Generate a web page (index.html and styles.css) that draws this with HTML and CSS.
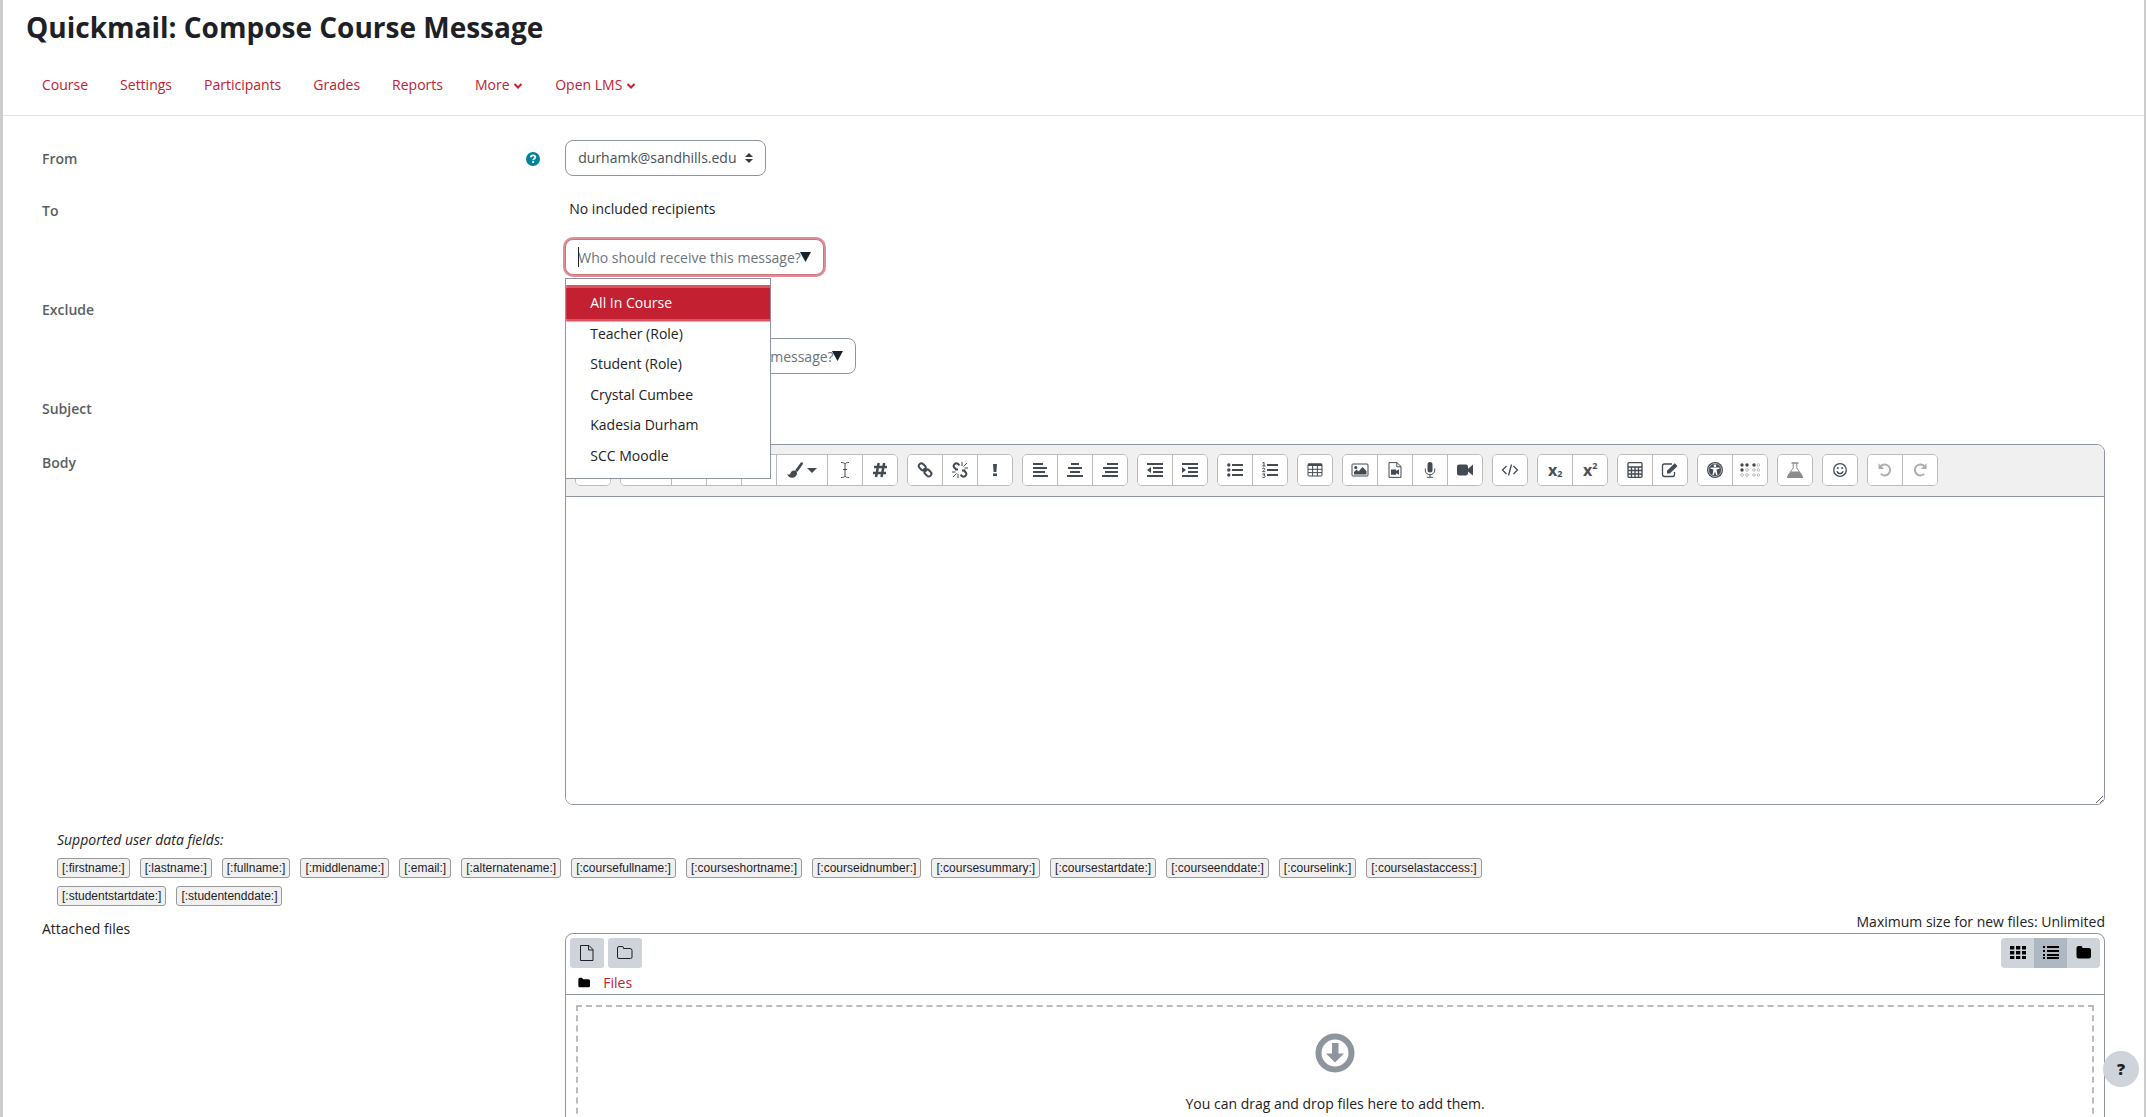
FILE: index.html
```html
<!DOCTYPE html>
<html lang="en">
<head>
<meta charset="utf-8">
<meta name="viewport" content="width=device-width, initial-scale=1">
<title>Quickmail: Compose Course Message</title>
<link rel="stylesheet" href="styles.css">
</head>
<body>
<div class="page">
  <header class="page-header">
    <h1>Quickmail: Compose Course Message</h1>
    <nav class="course-nav" aria-label="Course">
      <a href="#">Course</a>
      <a href="#">Settings</a>
      <a href="#">Participants</a>
      <a href="#">Grades</a>
      <a href="#">Reports</a>
      <a href="#">More <svg class="chevron" viewBox="0 0 10 8"><path d="M1.5 2l3.500 3.500L8.500 2"/></svg></a>
      <a href="#">Open LMS <svg class="chevron" viewBox="0 0 10 8"><path d="M1.500 2l3.500 3.500L8.500 2"/></svg></a>
    </nav>
  </header>

  <form class="compose">
    <div class="row">
      <div class="label-cell">
        <label for="from">From</label>
        <button type="button" class="help" aria-label="Help with From">
          <svg viewBox="0 0 14 14"><circle cx="7" cy="7" r="7" fill="#008196"/><path d="M4.700 5.300c.2-1.300 1-1.900 2.300-1.900 1.400 0 2.300.7 2.300 1.800 0 1.500-2.100 1.600-2.100 3" fill="none" stroke="#fff" stroke-width="1.800"/><path d="M6.200 9.200h1.900V11H6.200z" fill="#fff"/></svg>
        </button>
      </div>
      <div class="field">
        <div class="select-wrap">
          <select id="from" class="control"><option>durhamk@sandhills.edu</option></select>
          <svg class="sort" viewBox="0 0 8 10"><path d="M4 0l4 4H0zM4 10L0 6h8z" fill="#343a40"/></svg>
        </div>
      </div>
    </div>

    <div class="row">
      <div class="label-cell"><label for="to">To</label></div>
      <div class="field">
        <p class="selection">No included recipients</p>
        <div class="combo combo-to">
          <input id="to" class="control focused" type="text" placeholder="Who should receive this message?" role="combobox" aria-expanded="true" aria-controls="to-list">
          <span class="caret"></span>
          <svg class="drop" viewBox="0 0 11 10"><path d="M0 0h11L5.500 10z" fill="#1d2125"/></svg>
          <ul id="to-list" class="suggestions" role="listbox">
            <li role="option" aria-selected="true">All In Course</li>
            <li role="option">Teacher (Role)</li>
            <li role="option">Student (Role)</li>
            <li role="option">Crystal Cumbee</li>
            <li role="option">Kadesia Durham</li>
            <li role="option">SCC Moodle</li>
          </ul>
        </div>
      </div>
    </div>

    <div class="row">
      <div class="label-cell"><label for="exclude">Exclude</label></div>
      <div class="field">
        <p class="selection"></p>
        <div class="combo combo-exclude">
          <input id="exclude" class="control" type="text" placeholder="Who should NOT receive this message?">
          <svg class="drop" viewBox="0 0 11 10"><path d="M0 0h11L5.500 10z" fill="#1d2125"/></svg>
        </div>
      </div>
    </div>

    <div class="row">
      <div class="label-cell"><label for="subject">Subject</label></div>
      <div class="field"><input id="subject" class="control subject" type="text"></div>
    </div>

    <div class="row body-row">
      <div class="label-cell"><label for="body">Body</label></div>
      <div class="field">
        <div class="editor">
          <div class="toolbar" role="toolbar" aria-label="Formatting">
            <div class="group">
              <button type="button" aria-label="Show more buttons"></button>
            </div>
            <div class="group">
              <button type="button" class="wide" aria-label="Paragraph styles"></button>
              <button type="button" aria-label="Bold"></button>
              <button type="button" aria-label="Italic"></button>
              <button type="button" aria-label="Underline"></button>
              <button type="button" class="wide" aria-label="Font colour"><svg class="brush" viewBox="0 0 30 16"><path d="M15.300.3c.9.500.8 1.400.3 2.300l-4.300 6.200c-.6.800-1.300 1.200-2.200.8-.9-.5-1-1.300-.4-2.200l4.800-6.300c.5-.7 1.100-1.100 1.800-.8zM7.200 8.600c1.500.2 2.700 1.300 2.900 2.900-.3 2.600-2.400 4.200-5 4.200-2.500 0-4.400-1.200-4.800-3.700 2.300 1.200 2.800.4 3.300-.9.600-1.500 1.800-2.700 3.600-2.500z"/><path d="M20 6h10l-5 5z"/></svg></button>
              <button type="button" aria-label="Clear formatting"><svg viewBox="0 0 16 16"><path class="l" d="M4 .5c2 0 3.500.3 4 1.500.5-1.200 2-1.500 4-1.500M4 15.500c2 0 3.500-.3 4-1.500.5 1.200 2 1.500 4 1.500M8 2v12M6 7.500h4"/></svg></button>
              <button type="button" aria-label="Number"><svg viewBox="0 0 16 16"><path class="b" d="M6.700 1L4 15M12.200 1L9.500 15M2 5h13M1 11h13"/></svg></button>
            </div>
            <div class="group">
              <button type="button" aria-label="Link"><svg viewBox="0 0 16 16"><g class="m"><rect x="1.500" y="2.200" width="7.500" height="5.200" rx="2.600" transform="rotate(45 5.200 4.800)"/><rect x="7.200" y="8.400" width="7.500" height="5.200" rx="2.600" transform="rotate(45 11 11)"/><path d="M6.500 6.500l3 3"/></g></svg></button>
              <button type="button" aria-label="Unlink"><svg viewBox="0 0 16 16"><path class="m" d="M7.500 3.200L5.600 1.600Q4 .7 2.500 2.200T2 5.300L4.800 8M8.500 12.800l1.900 1.600q1.600.9 3.100-.6t.5-3.100L11.200 8M3 7.500h3M10 8.500h3.500"/><path class="l" d="M10 0v4M15 1l-3.500 3.500M12.500 6H16M6 12v4M4.500 11.500L1 15M0 10h3.500"/></svg></button>
              <button type="button" aria-label="Stop auto-linking"><svg viewBox="0 0 16 16"><path d="M6 2h4l-.6 8H6.600zM6 11.500h4V14H6z"/></svg></button>
            </div>
            <div class="group">
              <button type="button" aria-label="Align left"><svg viewBox="0 0 16 16"><path d="M1 1h10v2H1zM1 5h14v2H1zM1 9h12v2H1zM1 13h15v2H1z"/></svg></button>
              <button type="button" aria-label="Centre"><svg viewBox="0 0 16 16"><path d="M4 1h8v2H4zM1 5h14v2H1zM3 9h10v2H3zM0 13h16v2H0z"/></svg></button>
              <button type="button" aria-label="Align right"><svg viewBox="0 0 16 16"><path d="M5 1h11v2H5zM1 5h15v2H1zM3 9h13v2H3zM0 13h16v2H0z"/></svg></button>
            </div>
            <div class="group">
              <button type="button" aria-label="Outdent"><svg viewBox="0 0 16 16"><path d="M0 1h16v2H0zM6 5h10v2H6zM6 9h10v2H6zM0 13h16v2H0zM4 5v6L0 8z"/></svg></button>
              <button type="button" aria-label="Indent"><svg viewBox="0 0 16 16"><path d="M0 1h16v2H0zM6 5h10v2H6zM6 9h10v2H6zM0 13h16v2H0zM0 5v6l4-3z"/></svg></button>
            </div>
            <div class="group">
              <button type="button" aria-label="Bulleted list"><svg viewBox="0 0 16 16"><path d="M5 2h11v2H5zM5 7h11v2H5zM5 12h11v2H5z"/><circle cx="1.800" cy="3" r="1.700"/><circle cx="1.800" cy="8" r="1.700"/><circle cx="1.800" cy="13" r="1.700"/></svg></button>
              <button type="button" aria-label="Numbered list"><svg viewBox="0 0 16 16"><path d="M5 2h11v2H5zM5 7h11v2H5zM5 12h11v2H5z"/><path class="l" d="M.5 1L2 .3V4M.5 4h3M.3 6.700c1-.9 2.700-.5 2.500.6C2.700 8.200.7 9 .5 9.700H3.300M.4 12h2.700L1.700 13.200c2 0 2 2.300.1 2.300-.6 0-1-.1-1.500-.5"/></svg></button>
            </div>
            <div class="group">
              <button type="button" aria-label="Table"><svg viewBox="0 0 16 16"><rect class="l" x="1" y="2" width="14" height="12" rx="1"/><path d="M1 1.500h14v2.500H1z"/><path class="l" d="M1 7.300h14M1 10.600h14M5.600 3v11M10.400 3v11"/></svg></button>
            </div>
            <div class="group">
              <button type="button" aria-label="Image"><svg viewBox="0 0 18 16"><rect class="l" x="1" y="2" width="16" height="12" rx="1"/><circle cx="4.800" cy="5.500" r="1.600"/><path d="M3 12.500V10l2.500-2.500L7.500 9.500l4-4.500 4 4v3.500z"/></svg></button>
              <button type="button" aria-label="Media"><svg viewBox="0 0 16 16"><path class="l" d="M2 .6h8L14 4.500v10.900H2zM9.800.8v4H14"/><path d="M4 7.500h5.200V9L12 7.200v5.600L9.200 11v1.700H4z"/></svg></button>
              <button type="button" aria-label="Record audio"><svg viewBox="0 0 16 16"><rect x="5.500" y="0" width="5" height="10.500" rx="2.500"/><path class="l" d="M3.300 6.500v1.700c0 6 9.400 6 9.400 0V6.500M8 12.700v2.500M5 15.300h6"/></svg></button>
              <button type="button" aria-label="Record video"><svg viewBox="0 0 18 16"><rect x="1" y="2.500" width="11" height="11" rx="2.200"/><path d="M11.500 7.200L17 2.500v11l-5.500-4.200z"/></svg></button>
            </div>
            <div class="group">
              <button type="button" aria-label="HTML"><svg viewBox="0 0 18 16"><path class="s" d="M5.500 4L1.500 8l4 4M12.500 4l4 4-4 4M10.500 2.500l-3 11"/></svg></button>
            </div>
            <div class="group">
              <button type="button" class="script">x<sub>2</sub></button>
              <button type="button" class="script">x<sup>2</sup></button>
            </div>
            <div class="group">
              <button type="button" aria-label="Equation editor"><svg viewBox="0 0 16 16"><rect class="s" x="1" y=".7" width="14" height="14.600" rx="1"/><path class="s" d="M1 5h14M1 8.500h14M1 12h14M4.500 5v10M8 5v10M11.500 5v10"/></svg></button>
              <button type="button" aria-label="Edit"><svg viewBox="0 0 18 16"><path class="s" d="M11 2H3.500Q1.500 2 1.500 4v8.500q0 2 2 2h8q2 0 2-2V10"/><path d="M6 11.500V8.800l7.700-7.500 2.800 2.700L8.800 11.500z"/></svg></button>
            </div>
            <div class="group">
              <button type="button" aria-label="Accessibility checker"><svg viewBox="0 0 16 16"><circle cx="8" cy="8" r="8"/><circle cx="8" cy="8" r="6.500" fill="none" stroke="#fff" stroke-width=".6"/><circle cx="8" cy="3.700" r="1.300" fill="#fff"/><path d="M3.500 5.500h9v1.200L9.500 7.400l1 5.600H9.200L8 9.600 6.800 13H5.500l1-5.600-3-.7z" fill="#fff"/></svg></button>
              <button type="button" aria-label="Screenreader helper"><svg class="braille" viewBox="0 0 20 16"><g><circle cx="2" cy="3" r="1.700"/><circle cx="7" cy="3" r="1.700"/><circle cx="2" cy="8" r="1.700"/><circle cx="14" cy="3" r="1.700"/></g><g fill="none" stroke="#aaa" stroke-width=".8"><circle cx="7" cy="8" r="1.400"/><circle cx="2" cy="13" r="1.400"/><circle cx="7" cy="13" r="1.400"/><circle cx="18.500" cy="3" r="1.300"/><circle cx="14" cy="8" r="1.300"/><circle cx="18.500" cy="8" r="1.300"/><circle cx="14" cy="13" r="1.300"/><circle cx="18.500" cy="13" r="1.300"/></g></svg></button>
            </div>
            <div class="group">
              <button type="button" aria-label="Science"><svg viewBox="0 0 16 16"><g class="grey"><path d="M4.500.3h7v1.400h-7z"/><path d="M6.200 1v5L1.300 13v1.400h13.400V13L9.800 6V1" fill="none" stroke="#8b8b8b"/><path d="M4 9.500h8l4 5V16H0v-1.500z"/></g></svg></button>
            </div>
            <div class="group">
              <button type="button" aria-label="Emoji picker"><svg viewBox="0 0 16 16"><circle class="s" cx="8" cy="8" r="6.300"/><circle cx="5.800" cy="6" r="1"/><circle cx="10.200" cy="6" r="1"/><path class="s" d="M4.800 9.300c1 3 5.400 3 6.400 0"/></svg></button>
            </div>
            <div class="group">
              <button type="button" aria-label="Undo" disabled><svg viewBox="0 0 16 16"><path d="M3.500 4.300a5.500 5.500 0 1 1 .3 7.600" fill="none" stroke="#aaaeb1" stroke-width="2"/><path d="M1.500 1.200V7H7.200z" fill="#aaaeb1"/></svg></button>
              <button type="button" aria-label="Redo" disabled><svg viewBox="0 0 16 16"><path d="M12.500 4.300a5.500 5.500 0 1 0-.3 7.600" fill="none" stroke="#aaaeb1" stroke-width="2"/><path d="M14.500 1.200V7H8.800z" fill="#aaaeb1"/></svg></button>
            </div>
          </div>
          <textarea id="body"></textarea>
        </div>
      </div>
    </div>

    <section class="data-fields">
      <p>Supported user data fields:</p>
      <div class="tags">
        <button type="button">[:firstname:]</button>
        <button type="button">[:lastname:]</button>
        <button type="button">[:fullname:]</button>
        <button type="button">[:middlename:]</button>
        <button type="button">[:email:]</button>
        <button type="button">[:alternatename:]</button>
        <button type="button">[:coursefullname:]</button>
        <button type="button">[:courseshortname:]</button>
        <button type="button">[:courseidnumber:]</button>
        <button type="button">[:coursesummary:]</button>
        <button type="button">[:coursestartdate:]</button>
        <button type="button">[:courseenddate:]</button>
        <button type="button">[:courselink:]</button>
        <button type="button">[:courselastaccess:]</button>
        <button type="button">[:studentstartdate:]</button>
        <button type="button">[:studentenddate:]</button>
      </div>
    </section>

    <div class="row files-row">
      <div class="label-cell plain"><span>Attached files</span></div>
      <div class="field">
        <p class="limit">Maximum size for new files: Unlimited</p>
        <div class="manager">
          <div class="manager-head">
            <div class="manager-tools">
              <div class="actions">
                <button type="button" aria-label="Add file"><svg viewBox="0 0 16 16"><path d="M1.500.5h8.500l4 4v11H1.500zM9.500.5V5H14"/></svg></button>
                <button type="button" aria-label="Create folder"><svg viewBox="0 0 16 16"><path d="M.5 3q0-1.500 1.500-1.500h3Q6.500 1.500 6.500 3v.5H13q2 0 2 2V12q0 1.500-1.500 1.500H2Q.5 13.500.5 12z"/></svg></button>
              </div>
              <div class="views">
                <button type="button" aria-label="Icons"><svg viewBox="0 0 16 16"><path d="M0 1h4.300v3.500H0zM6 1h4.300v3.500H6zM12 1h4v3.500h-4zM0 6h4.300v3.500H0zM6 6h4.300v3.500H6zM12 6h4v3.500h-4zM0 11h4.300v3H0zM6 11h4.300v3H6zM12 11h4v3h-4z"/></svg></button>
                <button type="button" class="active" aria-label="List"><svg viewBox="0 0 16 16"><path d="M0 1h2v2H0zM4 1h12v2H4zM0 5h2v2H0zM4 5h12v2H4zM0 9h2v2H0zM4 9h12v2H4zM0 12h2v2H0zM4 12h12v2H4z"/></svg></button>
                <button type="button" aria-label="Tree"><svg viewBox="0 0 16 16"><path d="M.5 3q0-2 2-2H5q1.500 0 1.500 2H13q2 0 2 2v6.500q0 2-2 2H2.500q-2 0-2-2z"/></svg></button>
              </div>
            </div>
            <div class="path"><svg viewBox="0 0 16 16"><path d="M.5 3q0-2 2-2H5q1.500 0 1.500 2H14q2 0 2 2v6.500q0 2-2 2H2.500q-2 0-2-2z"/></svg><a href="#">Files</a></div>
          </div>
          <div class="dropzone">
            <svg viewBox="0 0 40 40"><circle cx="20" cy="20" r="16.500" fill="none" stroke="#8f959e" stroke-width="6"/><path d="M17 10h6.500v10.500H29L20 29.500l-9-9h6z" fill="#8f959e"/></svg>
            <p>You can drag and drop files here to add them.</p>
          </div>
        </div>
      </div>
    </div>
  </form>
  <button type="button" class="float-help" aria-label="Show footer">?</button>
</div>
</body>
</html>
```
FILE: styles.css
```css
* {
  box-sizing: border-box;
}

body {
  margin: 0;
  background: #fff;
  color: #1d2125;
  font: 14px/22px "Open Sans", "Noto Sans", sans-serif;
}

button,
input,
select,
textarea {
  font: inherit;
  color: inherit;
}

p,
h1,
ul {
  margin: 0;
  padding: 0;
}

a {
  color: #c32032;
  text-decoration: none;
}

.page {
  height: 100vh;
  overflow: hidden;
  border-left: 3px solid #ccc;
  border-right: 2px solid #ccc;
}

.page-header {
  border-bottom: 1px solid #dee2e6;
}

h1 {
  padding: 7px 23px 9px;
  font-size: 28px;
  line-height: 40px;
}

.course-nav {
  display: flex;
  gap: 32px;
  padding: 18px 39px 19px;
}

.chevron {
  width: 10px;
  height: 8px;
  fill: none;
  stroke: #c32032;
  stroke-width: 2;
}

.compose {
  display: flex;
  flex-direction: column;
  gap: 16px;
  padding: 24px 24px 0;
}

.row {
  display: grid;
  grid-template-columns: minmax(0, 1fr) minmax(0, 3fr);
}

.body-row {
  padding-top: 2px;
}

.label-cell {
  display: flex;
  justify-content: space-between;
  align-items: flex-start;
  padding: 8px 10px 0 15px;
  color: #5a5f64;
  font-weight: 600;
}

.plain {
  color: #1d2125;
  font-weight: 400;
}

.field {
  padding: 0 15px;
}

.help {
  display: flex;
  margin-top: 4px;
  padding: 0;
  border: 0;
  background: none;
}

.help svg {
  width: 14px;
  height: 14px;
}

.control {
  display: block;
  width: 100%;
  height: 36px;
  padding: 0 12px;
  border: 1px solid #8f959e;
  border-radius: 8px;
  background: #fff;
  color: #495057;
  appearance: none;
}

.control::placeholder {
  color: #6a737b;
  opacity: 1;
}

.select-wrap,
.combo {
  position: relative;
}

.select-wrap {
  width: 201px;
}

.sort {
  position: absolute;
  top: 13px;
  right: 13px;
  width: 8px;
  height: 10px;
  pointer-events: none;
}

.selection {
  min-height: 47px;
  padding: 6px 4px 19px;
}

.combo-to {
  width: 259px;
}

.combo-exclude {
  width: 291px;
}

.subject {
  width: 200px;
}

.focused {
  border-color: #c9777f;
  box-shadow: 0 0 0 2px #e08c96;
}

.caret {
  position: absolute;
  top: 8px;
  left: 13px;
  width: 1px;
  height: 20px;
  background: #1d2125;
}

.drop {
  position: absolute;
  top: 13px;
  right: 13px;
  width: 11px;
  height: 10px;
}

.suggestions {
  position: absolute;
  z-index: 2;
  top: 39px;
  left: 0;
  display: grid;
  grid-auto-rows: 1fr;
  width: 206px;
  height: 201px;
  padding: 9px 0 7px;
  border: 1px solid #8f959e;
  background: #fff;
  list-style: none;
}

.suggestions li {
  display: flex;
  align-items: center;
  padding: 0 24px;
}

.suggestions [aria-selected] {
  background: #c32032;
  color: #fff;
  box-shadow: 0 0 0 3px #d85563;
  clip-path: inset(-3px 0);
}

.editor {
  overflow: hidden;
  border: 1px solid #8f959e;
  border-radius: 8px;
}

.toolbar {
  display: flex;
  flex-wrap: wrap;
  gap: 9px;
  padding: 9px 9px 10px;
  border-bottom: 1px solid #8f959e;
  background: #f0f0f0;
}

.group {
  display: flex;
  overflow: hidden;
  border: 1px solid #bbb;
  border-radius: 5px;
  background: #fff;
}

.group button {
  display: flex;
  align-items: center;
  justify-content: center;
  width: 35px;
  height: 30px;
  padding: 0;
  border: 0;
  border-left: 1px solid #bbb;
  background: #fff;
  color: #495057;
}

.group button:first-child {
  width: 34px;
  border-left: 0;
}

.group .wide {
  width: 51px;
}

.group .wide:first-child {
  width: 50px;
}

.group svg {
  height: 16px;
  fill: #434a51;
}

.group .brush {
  width: 30px;
}

.group .l,
.group .s,
.group .m,
.group .b {
  fill: none;
  stroke: #434a51;
}

.group .s {
  stroke-width: 1.3;
}

.group .m {
  stroke-width: 2;
}

.group .b {
  stroke-width: 2.5;
}

.group .grey {
  fill: #8b8b8b;
}

.group .script {
  font-size: 16px;
  font-weight: 700;
}

.script sub,
.script sup {
  font-size: 9px;
  line-height: 10px;
}

.script sub {
  margin-top: 8px;
}

.script sup {
  margin-bottom: 8px;
}

textarea {
  display: block;
  width: 100%;
  height: 307px;
  padding: 12px;
  border: 0;
  resize: vertical;
}

.data-fields {
  width: 75%;
  padding: 8px 30px 0;
}

.data-fields p {
  font-style: italic;
}

.tags {
  display: flex;
  flex-wrap: wrap;
  gap: 8px 10px;
  padding-top: 7px;
}

.tags button {
  height: 20px;
  padding: 0 4px;
  border: 1px solid #999;
  border-radius: 3px;
  background: #f0f0f0;
  font: 12px/16px "Liberation Sans", sans-serif;
}

.files-row {
  margin-top: -11px;
}

.files-row .label-cell {
  padding-top: 7px;
}

.limit {
  text-align: right;
}

.manager {
  border: 1px solid #8f959e;
  border-radius: 8px;
}

.manager-head {
  padding: 4px 4px 0;
  border-bottom: 1px solid #8f959e;
}

.manager-tools,
.actions,
.views {
  display: flex;
}

.manager-tools {
  justify-content: space-between;
}

.actions {
  gap: 4px;
}

.manager button {
  display: flex;
  align-items: center;
  justify-content: center;
  width: 34px;
  height: 30px;
  padding: 0;
  border: 0;
  border-radius: 3px;
  background: #ced4da;
}

.manager button svg {
  width: 16px;
  height: 16px;
}

.actions svg {
  fill: none;
  stroke: #1d2125;
}

.views {
  overflow: hidden;
  border-radius: 4px;
}

.views button {
  border-radius: 0;
}

.manager .views button {
  width: 33px;
}

.manager .views .active {
  background: #adb8c2;
}

.path {
  display: flex;
  align-items: center;
  gap: 13px;
  padding: 4px 8px 0;
}

.path svg {
  width: 12px;
  height: 12px;
}

.dropzone {
  display: flex;
  flex-direction: column;
  align-items: center;
  gap: 20px;
  height: 160px;
  margin: 10px;
  padding-top: 26px;
  border: 2px dashed #bbb;
}

.dropzone svg {
  width: 40px;
  height: 40px;
}

.float-help {
  position: fixed;
  right: 7px;
  bottom: 30px;
  width: 36px;
  height: 36px;
  padding: 0;
  border: 0;
  border-radius: 50%;
  background: #ced4da;
  font-size: 16px;
  font-weight: 800;
}
```
